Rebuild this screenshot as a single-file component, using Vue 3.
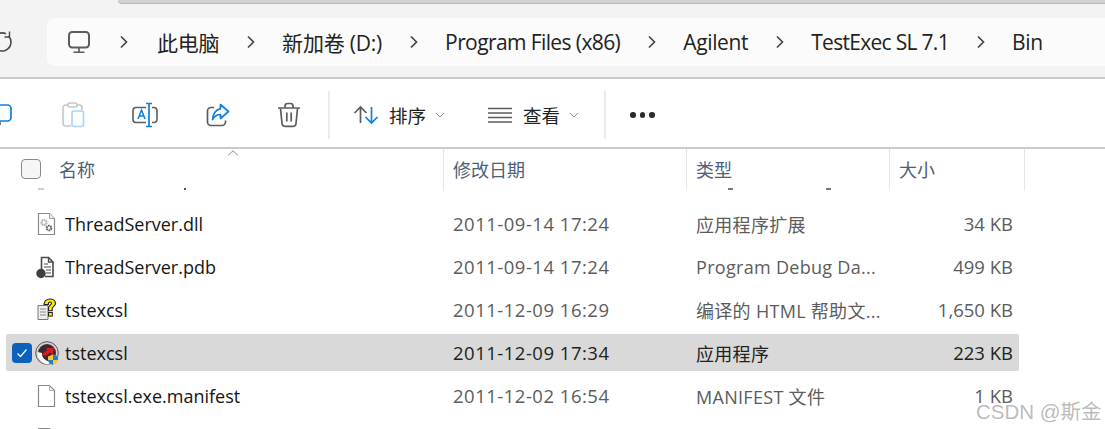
<script setup>
const crumbs = ['此电脑', '新加卷 (D:)', 'Program Files (x86)', 'Agilent', 'TestExec SL 7.1', 'Bin']
const rows = [
  { icon: 'dll', name: 'ThreadServer.dll', date: '2011-09-14 17:24', type: '应用程序扩展', size: '34 KB' },
  { icon: 'pdb', name: 'ThreadServer.pdb', date: '2011-09-14 17:24', type: 'Program Debug Da...', size: '499 KB' },
  { icon: 'chm', name: 'tstexcsl', date: '2011-12-09 16:29', type: '编译的 HTML 帮助文...', size: '1,650 KB' },
  { icon: 'exe', name: 'tstexcsl', date: '2011-12-09 17:34', type: '应用程序', size: '223 KB', selected: true },
  { icon: 'doc', name: 'tstexcsl.exe.manifest', date: '2011-12-02 16:54', type: 'MANIFEST 文件', size: '1 KB' },
  { icon: 'doc', name: '', date: '', type: '', size: '' }
]
</script>

<template>
  <div class="window">
    <div class="top">
      <div class="tabstrip"><div class="tab"></div></div>
      <div class="navrow">
        <svg class="refresh" width="12" height="24" viewBox="0 0 12 24" fill="none" stroke="#4a4a4a" stroke-width="1.6">
          <path d="M-1 20.500A9 9 0 0 0 11 12 9 9 0 0 0 8.500 6"/>
          <path d="M-1 3.500A9 9 0 0 1 6 3.700"/>
          <path d="M9.500 1.500V7H4.500" stroke-width="1.4"/>
        </svg>
        <div class="crumbbar">
          <svg class="pc" width="24" height="24" viewBox="0 0 24 24" fill="none" stroke="#5c5c5c" stroke-width="2">
            <rect x="2" y="2" width="20" height="15.5" rx="3.2"/>
            <path d="M12 18v4M6.5 22.3h11" stroke-width="1.6"/>
          </svg>
          <template v-for="c in crumbs" :key="c">
            <svg class="chev" width="12" height="14" viewBox="0 0 12 14" fill="none" stroke="#444" stroke-width="1.7">
              <path d="M3 1.5 8.5 7 3 12.5"/>
            </svg>
            <span class="crumb">{{ c }}</span>
          </template>
        </div>
      </div>
    </div>

    <div class="toolbar">
      <div class="tools">
        <svg class="t-copy" width="14" height="24" viewBox="0 0 14 24" fill="none">
          <rect x="-8" y="2" width="19" height="16" rx="3.5" stroke="#0f7fd8" stroke-width="1.7"/>
          <path d="M0 19 L0 22" stroke="#555" stroke-width="1.6"/>
        </svg>
        <svg class="t-paste" width="24" height="26" viewBox="0 0 24 26" fill="none">
          <path d="M6 3H3.5A2.5 2.5 0 0 0 1 5.5v16A2.5 2.5 0 0 0 3.5 24H9" stroke="#c6c6c6" stroke-width="1.6"/>
          <path d="M14 3h3.5A2.5 2.5 0 0 1 20 5.5V8" stroke="#c6c6c6" stroke-width="1.6"/>
          <rect x="6" y="1" width="9" height="4" rx="1.5" stroke="#c6c6c6" stroke-width="1.6"/>
          <rect x="10" y="9" width="11.5" height="15.5" rx="2" stroke="#a9d3f5" stroke-width="1.6"/>
        </svg>
        <svg class="t-rename" width="26" height="26" viewBox="0 0 26 26" fill="none">
          <path d="M14 5.500H4A3 3 0 0 0 1 8.500v9A3 3 0 0 0 4 20.500H14M20 5.500h2A3 3 0 0 1 25 8.500v9A3 3 0 0 1 22 20.500h-2" stroke="#5c5c5c" stroke-width="1.6"/>
          <path d="M6 17 9.500 8l3.500 9M7.200 14h4.600" stroke="#0f7fd8" stroke-width="1.500"/>
          <path d="M14 1.500h6M17 1.500v23M14 24.500h6" stroke="#0f7fd8" stroke-width="1.700"/>
        </svg>
        <svg class="t-share" width="24" height="24" viewBox="0 0 24 24" fill="none">
          <path d="M8 4.500H5A3.500 3.500 0 0 0 1.500 8v11A3.500 3.500 0 0 0 5 22.500h11a3.500 3.500 0 0 0 3.500-3.500v-1.500" stroke="#5c5c5c" stroke-width="1.700"/>
          <path d="M14.500 1.500 22.500 8.500 14.500 15.500v-4C11 11.500 8.500 13 6.500 16.500 6.800 11 10 6.200 14.500 5.800Z" stroke="#0f7fd8" stroke-width="1.700" stroke-linejoin="round"/>
        </svg>
        <svg class="t-trash" width="24" height="26" viewBox="0 0 24 26" fill="none" stroke="#5c5c5c" stroke-width="1.700">
          <path d="M1 6h22M8 5.500V4a2.500 2.500 0 0 1 2.500-2.500h3A2.500 2.500 0 0 1 16 4v1.500"/>
          <path d="M3.500 6.500 5 21.500a3 3 0 0 0 3 2.800h8a3 3 0 0 0 3-2.800L20.500 6.500"/>
          <path d="M9.800 10.500v9M14.200 10.500v9"/>
        </svg>
      </div>
      <div class="sep"></div>
      <div class="menu sort">
        <svg width="26" height="20" viewBox="0 0 26 20" fill="none" stroke-width="1.700">
          <path d="M7.500 18V2M1.500 8l6-6 6 6" stroke="#5c5c5c"/>
          <path d="M18.500 2v16M12.500 12l6 6 6-6" stroke="#0f7fd8"/>
        </svg>
        <span class="menu-label">排序</span>
        <svg class="caret" width="10" height="6" viewBox="0 0 10 6" fill="none" stroke="#8a8a8a" stroke-width="1"><path d="M1 1l4 4 4-4"/></svg>
      </div>
      <div class="menu view">
        <svg width="24" height="16" viewBox="0 0 24 16" fill="none" stroke="#5c5c5c" stroke-width="1.400">
          <path d="M0 1.500h24M0 6h24M0 10.500h24M0 15h24"/>
        </svg>
        <span class="menu-label">查看</span>
        <svg class="caret" width="10" height="6" viewBox="0 0 10 6" fill="none" stroke="#8a8a8a" stroke-width="1"><path d="M1 1l4 4 4-4"/></svg>
      </div>
      <div class="sep sep2"></div>
      <div class="dots"><i></i><i></i><i></i></div>
    </div>

    <div class="head">
      <svg class="sort-up" width="12" height="6" viewBox="0 0 12 6" fill="none" stroke="#8f8f8f" stroke-width="1"><path d="M1 5.500 6 .8l5 4.700"/></svg>
      <div class="hc hc-name"><span class="box"></span><span>名称</span></div>
      <div class="hc hc-date">修改日期</div>
      <div class="hc hc-type">类型</div>
      <div class="hc hc-size">大小</div>
    </div>

    <div class="list">
      <span class="clip c1"></span><span class="clip c2"></span><span class="clip c3"></span><span class="clip c4"></span>
      <div v-for="(r, i) in rows" :key="i" class="row" :class="{ selected: r.selected }">
        <div class="c-name">
          <span v-if="r.selected" class="check">
            <svg width="12" height="10" viewBox="0 0 12 10" fill="none" stroke="#fff" stroke-width="1.200"><path d="M1.500 5.500 4.500 8.500 10.500 1.500"/></svg>
          </span>
          <span class="ico" :class="{ wide: r.icon === 'exe' }">
            <svg v-if="r.icon === 'dll'" width="20" height="24" viewBox="0 0 20 24" fill="none">
              <path d="M2.500 1.500h11l5 5v16h-16Z" fill="#fff" stroke="#8a8a8a" stroke-width="1.200"/>
              <path d="M13.500 1.500v5h5" fill="#f2f2f2" stroke="#a0a0a0"/>
              <circle cx="8" cy="10.500" r="2.500" fill="none" stroke="#aab0b8" stroke-width="2.200" stroke-dasharray="1.600 .6"/>
              <circle cx="13" cy="16" r="2.300" fill="none" stroke="#5d6268" stroke-width="2" stroke-dasharray="1.600 .6"/>
            </svg>
            <svg v-else-if="r.icon === 'pdb'" width="20" height="24" viewBox="0 0 20 24" fill="none">
              <path d="M5.500 14V2.500h7l4.500 4.500v14.500H9" fill="#fff" stroke="#4a4a4a" stroke-width="1.600"/>
              <path d="M12.500 2.500V7H17" stroke="#4a4a4a" stroke-width="1.300"/>
              <path d="M8 9h4M8 12h7M10 15h5M10 18h5" stroke="#4a4a4a" stroke-width="1.200"/>
              <circle cx="5" cy="18.500" r="4.700" fill="#3f3f3f"/>
            </svg>
            <svg v-else-if="r.icon === 'chm'" width="20" height="24" viewBox="0 0 20 24" fill="none">
              <path d="M2 7.500h10v14H2Z" fill="#eeeeee" stroke="#777" stroke-width="1"/>
              <path d="M4 11h6M4 14h6M4 17h6" stroke="#888" stroke-width="1"/>
              <path d="M8 6.500C8 3 11 1 14 1s5.500 1.700 5.500 4.500c0 2.500-2.800 3.300-3.300 4.800v2.500h-3.700v-3c0-2 3-3 3-4.500 0-.9-.7-1.300-1.500-1.300s-1.600.5-1.600 2.500Z" fill="#ffe900" stroke="#222" stroke-width="1.100"/>
              <rect x="12.500" y="14.500" width="3.800" height="3.600" fill="#ffe900" stroke="#222" stroke-width="1"/>
            </svg>
            <svg v-else-if="r.icon === 'exe'" width="24" height="24" viewBox="0 0 24 24" fill="none">
              <circle cx="12" cy="12" r="11.300" fill="#d8d0d2" stroke="#555" stroke-width="1"/>
              <circle cx="12" cy="12" r="9" fill="#3a2a30"/>
              <path d="M2.500 11C2 17 7 23 13 23.500l3-3C10 20.500 6.500 16 7 12Z" fill="#f6f6f6"/>
              <path d="M7 14c1-2 3-3.500 5-4.500L11.500 7 19 7l-1.500 7-2-2.500c-2 .8-3.500 2-4.500 3.500Z" fill="#e01818"/>
              <path d="M13 15.500l5-2 5 2v3c0 2.500-2.500 4.500-5 5.500-2.500-1-5-3-5-5.500Z" fill="#ffc81e"/>
              <path d="M18 13.500l5 2v3.500h-5Z" fill="#1f7fd6"/>
              <path d="M13 19h5v5c-2.500-1-5-2.500-5-5Z" fill="#1f7fd6"/>
            </svg>
            <svg v-else width="20" height="24" viewBox="0 0 20 24" fill="none">
              <path d="M2.500 1.500h11l5 5v16h-16Z" fill="#fff" stroke="#8a8a8a" stroke-width="1.200"/>
              <path d="M13.500 1.500v5h5" stroke="#a8a8a8"/>
            </svg>
          </span>
          <span class="fname">{{ r.name }}</span>
        </div>
        <div class="c-date">{{ r.date }}</div>
        <div class="c-type">{{ r.type }}</div>
        <div class="c-size">{{ r.size }}</div>
      </div>
    </div>
    <div class="mark">CSDN @斯金</div>
  </div>
</template>

<style>
html, body { margin: 0; overflow: hidden; background: #fff; }
</style>

<style scoped>
.window {
  position: relative;
  width: 1105px;
  height: 429px;
  overflow: hidden;
  background: #fff;
  font-family: "Open Sans", "Noto Sans CJK SC", sans-serif;
  color: #1a1a1a;
}
.top { height: 77px; background: #f3f3f3; border-bottom: 2px solid #cbcbcb; }
.tabstrip { height: 18px; padding-left: 118px; }
.tab { height: 4px; background: #d2d2d2; border-bottom: 1px solid #b8b8b8; border-bottom-left-radius: 6px; box-sizing: border-box; }
.navrow { display: flex; align-items: center; }
.refresh { width: 12px; margin-right: 35px; flex: none; overflow: visible; }
.crumbbar {
  flex: 1;
  height: 48px;
  display: flex;
  align-items: center;
  background: #fbfbfb;
  border-radius: 8px 0 0 8px;
  padding-left: 20px;
}
.pc { margin-right: 27px; flex: none; }
.chev { flex: none; margin-right: 25px; }
.crumb { font-size: 21px; letter-spacing: -.35px; margin-right: 26px; white-space: nowrap; color: #222; }
.crumb:nth-of-type(1) { margin-left: 2px; letter-spacing: -.3px; }
.crumb:nth-of-type(2) { letter-spacing: -.2px; }
.crumb:nth-of-type(3) { letter-spacing: -.6px; }
.crumb:nth-of-type(5) { letter-spacing: -.7px; }

.toolbar { height: 64px; padding-top: 4px; display: flex; align-items: center; border-bottom: 2px solid #cbcbcb; }
.tools { display: flex; align-items: center; width: 328px; flex: none; }
.t-copy { margin-right: 48px; }
.t-paste { margin-right: 46px; }
.t-rename { margin-right: 48px; }
.t-share { margin-right: 47px; }
.sep { width: 2px; height: 48px; background: #ececec; flex: none; }
.sep2 { margin-left: 25px; }
.menu { display: flex; align-items: center; flex: none; }
.sort { margin-left: 23px; }
.view { margin-left: 43px; }
.menu-label { font-size: 18.500px; margin-left: 10px; margin-right: 9px; color: #222; }
.view .menu-label { margin-left: 11px; }
.dots { display: flex; gap: 4px; margin-left: 24px; }
.dots i { width: 5.500px; height: 5.500px; border-radius: 50%; background: #2b2b2b; display: block; }

.head { position: relative; display: flex; height: 42px; }
.sort-up { position: absolute; left: 227px; top: 1px; }
.hc {
  box-sizing: border-box;
  display: flex;
  align-items: center;
  height: 42px;
  padding-bottom: 2px;
  font-size: 18px;
  color: #4c6079;
  border-right: 1.500px solid #e6e6e6;
  padding-left: 9px;
}
.hc-name { width: 444px; padding-left: 21px; gap: 18px; }
.hc-date { width: 243px; }
.hc-type { width: 203px; }
.hc-size { width: 135px; }
.box { width: 20px; height: 20px; border: 1px solid #8a8a8a; border-radius: 4px; background: #f6f6f6; box-sizing: border-box; }

.list { position: relative; padding: 14px 86px 0 6px; }
.clip { position: absolute; top: -3px; height: 2px; background: #555; }
.c1 { left: 38px; width: 6px; background: #cfcfcf; }
.c2 { left: 184px; width: 2px; }
.c3 { left: 728px; width: 5px; background: #777; }
.c4 { left: 826px; width: 5px; background: #777; }

.row { display: flex; align-items: center; height: 37px; margin-bottom: 6px; border-radius: 2px; font-size: 18px; }
.row.selected { background: #d9d9d9; }
.c-name { position: relative; width: 447px; flex: none; display: flex; align-items: center; padding-left: 59px; box-sizing: border-box; height: 100%; }
.check {
  position: absolute;
  left: 6px;
  top: 9px;
  width: 20px;
  height: 20px;
  background: #0a62bd;
  border-radius: 4px;
  display: flex;
  align-items: center;
  justify-content: center;
}
.ico { position: absolute; left: 30px; top: 7px; width: 24px; height: 24px; display: flex; }
.ico.wide { left: 29px; }
.fname { white-space: nowrap; color: #151515; }
.c-date { width: 243px; flex: none; color: #5c5c5c; font-size: 18.500px; letter-spacing: .5px; }
.c-type { width: 203px; flex: none; color: #5c5c5c; white-space: nowrap; letter-spacing: .3px; }
.c-size { flex: 1; text-align: right; padding-right: 6px; color: #5c5c5c; font-size: 18.500px; }
.selected .c-date, .selected .c-type, .selected .c-size { color: #222; }
.mark {
  position: absolute;
  left: 976px;
  top: 395px;
  font-size: 20.500px;
  font-family: "Liberation Sans", "Noto Sans CJK SC", sans-serif;
  color: rgba(120, 120, 120, .5);
  white-space: nowrap;
}
</style>
